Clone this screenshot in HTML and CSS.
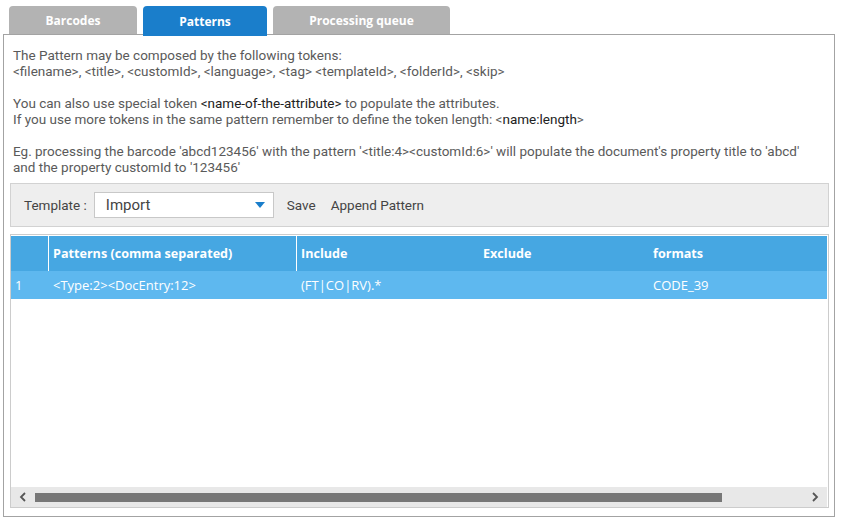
FILE: index.html
```html
<!DOCTYPE html>
<html>
<head>
<meta charset="utf-8">
<link rel="stylesheet" href="styles.css">
</head>
<body>
<div class="tabs">
  <div class="tab tab-barcodes">Barcodes</div>
  <div class="tab tab-active tab-patterns">Patterns</div>
  <div class="tab tab-queue">Processing queue</div>
</div>
<div class="panel">
  <div class="help">
    <p>The Pattern may be composed by the following tokens:<br>&lt;filename&gt;, &lt;title&gt;, &lt;customId&gt;, &lt;language&gt;, &lt;tag&gt; &lt;templateId&gt;, &lt;folderId&gt;, &lt;skip&gt;</p>
    <p>You can also use special token <b>&lt;name-of-the-attribute&gt;</b> to populate the attributes.<br>If you use more tokens in the same pattern remember to define the token length: &lt;<b>name:length</b>&gt;</p>
    <p>Eg. processing the barcode 'abcd123456' with the pattern '&lt;title:4&gt;&lt;customId:6&gt;' will populate the document's property title to 'abcd'<br>and the property customId to '123456'</p>
  </div>
  <div class="toolbar">
    <span class="label">Template :</span>
    <div class="select"><span>Import</span><span class="caret"></span></div>
    <span class="action">Save</span>
    <span class="action">Append Pattern</span>
  </div>
  <div class="grid">
    <div class="row head">
      <div class="c c-num"></div>
      <div class="c c-pat sep">Patterns (comma separated)</div>
      <div class="c c-inc sep">Include</div>
      <div class="c c-exc">Exclude</div>
      <div class="c c-fmt">formats</div>
    </div>
    <div class="row data">
      <div class="c c-num">1</div>
      <div class="c c-pat">&lt;Type:2&gt;&lt;DocEntry:12&gt;</div>
      <div class="c c-inc">(FT|CO|RV).*</div>
      <div class="c c-exc"></div>
      <div class="c c-fmt">CODE_39</div>
    </div>
    <div class="spacer"></div>
    <div class="hscroll">
      <span class="arrow">
        <svg width="8" height="10" viewBox="0 0 8 10"><path d="M6 1 L2 5 L6 9" fill="none" stroke="#555" stroke-width="1.8"/></svg>
      </span>
      <div class="track"><div class="thumb"></div></div>
      <span class="arrow">
        <svg width="8" height="10" viewBox="0 0 8 10"><path d="M2 1 L6 5 L2 9" fill="none" stroke="#555" stroke-width="1.8"/></svg>
      </span>
    </div>
  </div>
</div>
</body>
</html>
```
FILE: styles.css
```css
* { box-sizing: border-box; }
html, body { margin: 0; padding: 0; background: #fff; }
body { font-family: Roboto, "Liberation Sans", sans-serif; width: 841px; height: 522px; overflow: hidden; }

.tabs { display: flex; gap: 6px; padding: 6px 0 0 9px; height: 34px; }
.tab {
  height: 28px; border-radius: 4px 4px 0 0;
  background: #b3b3b3; color: #fff;
  font-family: "Open Sans", "Liberation Sans", sans-serif; font-weight: 700; font-size: 12px;
  display: flex; align-items: center; justify-content: center;
  padding-top: 1px;
}
.tab-barcodes { width: 128px; }
.tab-patterns { width: 124px; }
.tab-queue { width: 177px; }
.tab-active { background: #1a7ecb; height: 30px; position: relative; z-index: 1; }

.panel {
  margin-left: 3px; width: 832px; height: 483px;
  border: 1px solid #a3a3a3;
  padding: 12px 5px 8px 6px;
  display: flex; flex-direction: column;
}
.help { padding-left: 3px; color: #5a5a5a; font-size: 13.5px; line-height: 16px; }
.help p { margin: 0 0 16px 0; }
.help p:last-child { margin-bottom: 0; }
.help b { font-weight: 400; color: #222; }

.toolbar {
  margin-top: 8px; height: 44px;
  background: #eeeeee; border: 1px solid #d2d2d2;
  display: flex; align-items: center; padding-left: 13px;
  font-size: 13.5px; color: #444;
}
.toolbar .label { margin-right: 7px; }
.select {
  width: 180px; height: 26px; background: #fff; border: 1px solid #c8c8c8;
  display: flex; align-items: center; justify-content: space-between;
  padding: 0 8px 0 11px; font-size: 15px; color: #444; margin-right: 13px;
}
.caret { width: 0; height: 0; border-left: 5px solid transparent; border-right: 5px solid transparent; border-top: 6px solid #1a7ecb; }
.action { margin-right: 15px; }

.grid {
  margin-top: 7px; flex: 1;
  border: 1px solid #cccccc;
  display: flex; flex-direction: column;
  padding: 1px 0 0 0;
}
.row { display: flex; color: #fff; font-family: "Open Sans", "Liberation Sans", sans-serif; font-size: 13px; }
.head { height: 35px; background: #46a7e2; font-weight: 700; font-size: 12.6px; margin-right: 1px; }
.data { height: 28px; background: #5eb8ef; margin-right: 1px; }
.c { display: flex; align-items: center; padding-left: 4px; }
.c-num { width: 37px; }
.c-pat { width: 248px; }
.c-inc { width: 183px; }
.c-exc { width: 170px; }
.c-fmt { flex: 1; }
.head .sep { border-left: 1px solid #fff; }
.data .c-pat { border-left: 1px solid transparent; }
.data .c-inc { border-left: 1px solid transparent; }
.spacer { flex: 1; }
.hscroll {
  height: 20px; background: #e8e8e8; margin-right: 1px;
  display: flex; align-items: center;
}
.arrow { width: 24px; display: flex; justify-content: center; }
.track { flex: 1; height: 100%; display: flex; align-items: center; }
.thumb { width: 687px; height: 9px; background: #777; }
```
